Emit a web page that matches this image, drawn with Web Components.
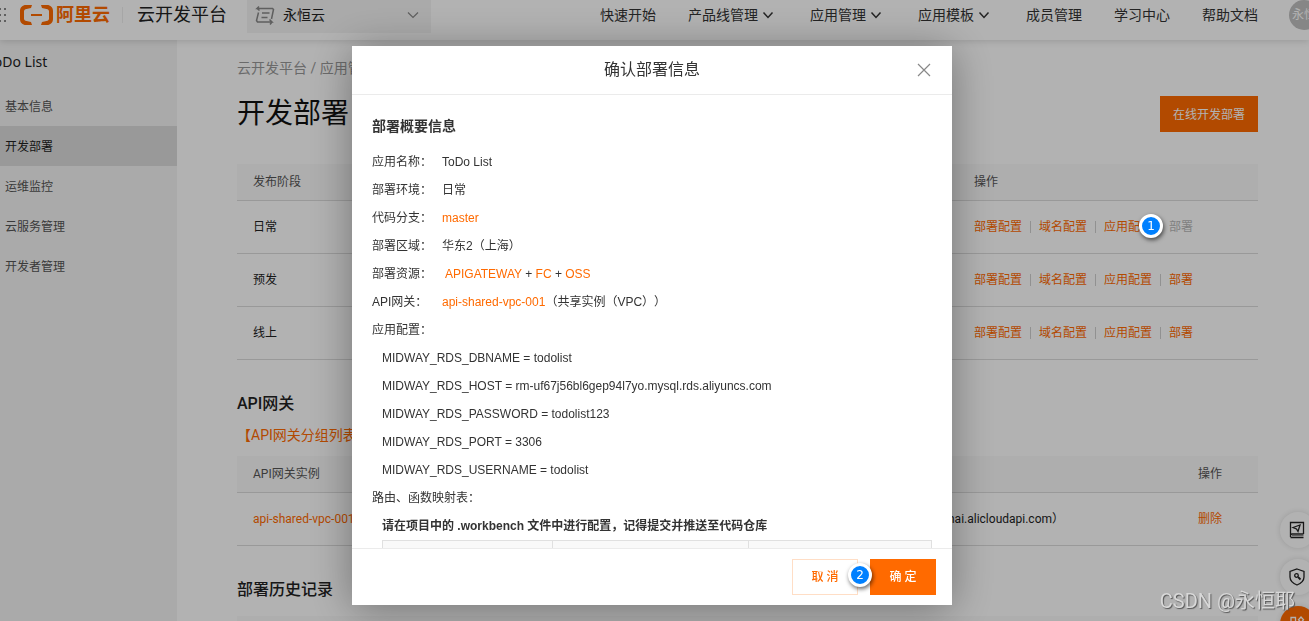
<!DOCTYPE html>
<html lang="zh-CN">
<head>
<meta charset="utf-8">
<title>云开发平台 - 开发部署</title>
<style>
  body { margin: 0; }
</style>
</head>
<body>
<deploy-app></deploy-app>
<script>
const define = (name, html, setup) => {
  const tpl = document.createElement('template');
  tpl.innerHTML = html;
  customElements.define(name, class extends HTMLElement {
    constructor() {
      super();
      this.attachShadow({ mode: 'open' }).append(tpl.content.cloneNode(true));
    }
    connectedCallback() { if (setup) setup(this, this.shadowRoot); }
  });
};

define('nav-link', `
<style>
  :host { display: block; }
  a { display: flex; align-items: center; color: #333; text-decoration: none; font-size: 14px; line-height: 20px; white-space: nowrap; }
  svg { display: none; width: 12px; height: 12px; margin: 0 4px; }
  :host([menu]) svg { display: block; }
</style>
<a href="#"><slot></slot><svg viewBox="0 0 12 12" fill="none" stroke="#333" stroke-width="1.5"><path d="M1.5 3.5 6 8.5 10.5 3.5"/></svg></a>`);

define('app-header', `
<style>
  :host { display: flex; align-items: center; height: 40px; padding-bottom: 10px; box-sizing: border-box; background: #fff; box-shadow: 0 2px 6px rgba(0,0,0,.12); position: relative; }
  .dots { width: 7px; height: 14px; margin-right: 13px; flex: none; }
  .brand { display: flex; align-items: center; gap: 3px; color: #ff6a00; font-size: 18px; font-weight: 700; line-height: 20px; text-decoration: none; white-space: nowrap; }
  .brand svg { width: 33px; height: 20px; }
  .line { width: 1px; height: 16px; background: #eee; margin: 0 14px 0 12px; }
  .platform { font-size: 18px; line-height: 24px; color: #222; white-space: nowrap; }
  .org { position: relative; display: flex; align-items: center; gap: 8px; width: 184px; height: 36px; margin-left: 20px; padding: 0 12px 0 8px; box-sizing: border-box; background: #f4f4f4; }
  .org svg { flex: none; }
  select { flex: 1; min-width: 0; appearance: none; border: 0; padding: 0; background: none; font: inherit; font-size: 14px; line-height: 20px; color: #222; }
  nav { display: flex; gap: 32px; margin-left: auto; }
  .avatar { width: 20px; height: 30px; margin-left: 31px; overflow: hidden; flex: none; }
  .avatar span { display: block; width: 30px; height: 30px; border-radius: 50%; background: #c0c0c0; color: #fff; font-size: 12px; line-height: 30px; text-align: center; white-space: nowrap; }
</style>
<svg class="dots" viewBox="0 0 7 14" fill="#888"><path d="M0 0h1v2H0zM4 0h2v2H4zM0 6h1v2H0zM4 6h2v2H4zM0 12h1v2H0zM4 12h2v2H4z"/></svg>
<a class="brand" href="#"><svg viewBox="0 0 33 20" fill="#ff6a00"><path d="M12 0H6C2.500 0 0 2.500 0 6v8c0 3.500 2.500 6 6 6h6l-1-3-4.500-1C5 15.700 4 15 4 13.500v-7C4 5 5 4.300 6.500 4L11 3zM21 0h6c3.500 0 6 2.500 6 6v8c0 3.500-2.500 6-6 6h-6l1-3 4.500-1c1.500-.3 2.500-1 2.500-2.500v-7C29 5 28 4.300 26.500 4L22 3zM11 9h11v2H11z"/></svg>阿里云</a>
<span class="line"></span>
<span class="platform">云开发平台</span>
<label class="org">
  <svg width="20" height="20" viewBox="0 0 20 20" fill="none" stroke="#888" stroke-width="1.500"><path d="M4 1.500 2 3.500H17.500L18.500 4.500 16.500 14M2 3.500 4.500 5.500M3.500 7.500 1.500 15.500 2.500 17H17L14.500 14.500M17 17 15 19.500M7 8h7.500M6.500 12.500H12.500"/></svg>
  <select aria-label="组织"><option>永恒云</option></select>
  <svg width="12" height="12" viewBox="0 0 12 12" fill="none" stroke="#888" stroke-width="1.200"><path d="M1 3.500 6 8.500 11 3.500"/></svg>
</label>
<nav>
  <nav-link>快速开始</nav-link>
  <nav-link menu>产品线管理</nav-link>
  <nav-link menu>应用管理</nav-link>
  <nav-link menu>应用模板</nav-link>
  <nav-link>成员管理</nav-link>
  <nav-link>学习中心</nav-link>
  <nav-link>帮助文档</nav-link>
</nav>
<div class="avatar"><span>永恒</span></div>`);

define('side-nav', `
<style>
  :host { display: block; width: 177px; flex: none; background: #f4f4f4; overflow: hidden; }
  h2 { margin: 0 0 0 -13px; font: 400 14px/44px "Noto Sans", sans-serif; color: #222; white-space: nowrap; }
  ul { margin: 2px 0 0; padding: 0; list-style: none; }
  a { display: block; height: 38px; padding: 2px 0 0 5px; font-size: 12px; line-height: 38px; color: #555; text-decoration: none; }
  a[aria-current] { background: #dcdcdc; color: #222; }
</style>
<h2>ToDo List</h2>
<ul>
  <li><a href="#">基本信息</a></li>
  <li><a href="#" aria-current="page">开发部署</a></li>
  <li><a href="#">运维监控</a></li>
  <li><a href="#">云服务管理</a></li>
  <li><a href="#">开发者管理</a></li>
</ul>`);

const tableStyle = `
  :host { display: block; }
  table { width: 100%; border-collapse: collapse; table-layout: fixed; font-size: 12px; line-height: 20px; }
  th, td { padding: 0 16px; text-align: left; border-bottom: 1px solid #dcdcdc; font-weight: 400; white-space: nowrap; }
  th { height: 36px; color: #555; background: #f9f9f9; }
  td { height: 52px; color: #222; }
  a { color: #ff6a00; text-decoration: none; }`;

define('row-actions', `
<style>
  :host { display: flex; align-items: center; gap: 8px; }
  a { color: #ff6a00; text-decoration: none; }
  i { width: 1px; height: 12px; background: #d0d0d0; }
  :host([locked]) a:last-child { color: #b8b8b8; }
</style>
<a href="#">部署配置</a><i></i><a href="#">域名配置</a><i></i><a href="#">应用配置</a><i></i><a href="#">部署</a>`);

define('stage-table', `
<style>${tableStyle}
  .ops { width: 268px; }
</style>
<table>
  <thead><tr><th>发布阶段</th><th class="ops">操作</th></tr></thead>
  <tbody>
    <tr><td>日常</td><td><row-actions locked></row-actions></td></tr>
    <tr><td>预发</td><td><row-actions></row-actions></td></tr>
    <tr><td>线上</td><td><row-actions></row-actions></td></tr>
  </tbody>
</table>`);

define('gateway-table', `
<style>${tableStyle}
  .domain { width: 218px; }
  .ops { width: 44px; }
</style>
<table>
  <thead><tr><th>API网关实例</th><th class="domain"></th><th class="ops">操作</th></tr></thead>
  <tbody><tr><td><a href="#">api-shared-vpc-001</a></td><td class="domain">hai.alicloudapi.com）</td><td><a href="#">删除</a></td></tr></tbody>
</table>`);

define('history-table', `
<style>${tableStyle}</style>
<table><thead><tr><th></th></tr></thead></table>`);

define('deploy-page', `
<style>
  :host { display: block; flex: 1; min-width: 0; padding: 18px 51px 0 60px; background: #fff; }
  .crumbs { font-size: 14px; line-height: 20px; color: #999; white-space: nowrap; }
  .title { display: flex; align-items: center; justify-content: space-between; height: 36px; margin: 18px 0 32px; }
  h1 { margin: 0; font-size: 28px; font-weight: 400; line-height: 36px; color: #111; }
  button { height: 36px; border: 0; padding: 0 13px 2px; background: #ff6a00; color: #fff; font: inherit; font-size: 12px; }
  h3 { margin: 32px 0 9px; font-size: 16px; font-weight: 500; line-height: 24px; color: #222; }
  .link { display: block; margin-bottom: 11px; font-size: 14px; line-height: 20px; color: #ff6a00; text-decoration: none; }
  .last { margin-bottom: 14px; }
</style>
<div class="crumbs">云开发平台 / 应用管理</div>
<div class="title"><h1>开发部署</h1><button type="button">在线开发部署</button></div>
<stage-table></stage-table>
<h3>API网关</h3>
<a class="link" href="#">【API网关分组列表】</a>
<gateway-table></gateway-table>
<h3 class="last">部署历史记录</h3>
<history-table></history-table>`);

define('float-tools', `
<style>
  :host { position: fixed; top: 512px; right: -7px; display: grid; gap: 11px; }
  button { width: 36px; height: 36px; padding: 0; border: 0; border-radius: 50%; display: grid; place-items: center; background: #fff; box-shadow: 0 0 6px rgba(0,0,0,.14); }
  .hot { background: #ff6a00; }
  svg { width: 18px; height: 18px; display: block; fill: none; stroke: #222; stroke-width: 1.300; }
  .hot svg { stroke: #fff; }
</style>
<button type="button" aria-label="文档"><svg viewBox="0 0 18 18"><path d="M1.500 16V1.500H14.500V13M1.500 14.500q0-1.500 1.500-1.500H14.500M1.500 16.500H14.500M4 6.500 11 4 9 10.500 7.500 8z"/><path d="M3 14.500H14.500" stroke="#888"/></svg></button>
<button type="button" aria-label="安全"><svg viewBox="0 0 18 18"><path d="M8 1 15 3.500V9c0 4-3.500 6.500-7 8-3.500-1.500-7-4-7-8V3.500z"/><circle cx="7.500" cy="7.500" r="1.800"/><path d="m9 9 2.500 2.500" stroke-width="1.800"/></svg></button>
<button type="button" class="hot" aria-label="应用"><svg viewBox="0 0 18 18"><path d="M2 2.500H6.500V7H2zM12 2 14.500 4.800 12 7.500 9.500 4.800zM2 10.500H6.500V15H2zM9.500 10.500H14V15H9.500z"/></svg></button>`);

define('step-badge', `
<style>
  :host { display: block; position: absolute; width: 24px; height: 24px; box-sizing: border-box; border: 3px solid #fff; border-radius: 50%; background: #0080ff; color: #fff; font: 12px/18px "DejaVu Sans", sans-serif; text-align: center; box-shadow: 1px 2px 4px rgba(0,0,0,.6); }
</style><slot></slot>`);

define('info-row', `
<style>
  :host { display: flex; line-height: 28px; }
  .label { width: 70px; flex: none; white-space: nowrap; }
</style>
<span class="label"><slot name="label"></slot></span><span><slot></slot></span>`);

define('confirm-dialog', `
<style>
  :host { position: fixed; inset: 0; display: flex; justify-content: center; align-items: flex-start; padding: 46px 5px 0 0; background: rgba(0,0,0,.3); }
  section { width: 600px; background: #fff; box-shadow: 0 4px 40px rgba(0,0,0,.36); color: #333; font-family: "Liberation Sans", "Noto Sans CJK SC", sans-serif; font-size: 12px; text-spacing-trim: space-all; }
  header { position: relative; border-bottom: 1px solid #ebebeb; }
  header h2 { margin: 0; font-size: 16px; font-weight: 400; line-height: 48px; text-align: center; }
  .close { position: absolute; top: 16px; right: 20px; width: 16px; height: 16px; padding: 0; border: 0; background: none; }
  .close svg { display: block; }
  .body { height: calc(100vh - 168px); padding: 17px 20px 0; box-sizing: border-box; overflow: hidden; }
  h3 { margin: 0 0 8px; font-size: 14px; font-weight: 700; line-height: 28px; }
  a { color: #ff6a00; text-decoration: none; }
  .gap { margin-left: 3px; }
  p { margin: 0 0 0 10px; line-height: 28px; }
  .tip { font-weight: 700; }
  table { width: 550px; margin-left: 10px; border-collapse: collapse; table-layout: fixed; }
  th { height: 36px; padding: 0; border: 1px solid #e0e0e0; background: #f9f9f9; }
  .c1 { width: 169px; } .c2 { width: 195px; }
  footer { position: relative; display: flex; justify-content: flex-end; gap: 12px; padding: 10px 16px; border-top: 1px solid #ebebeb; }
  footer button { width: 66px; height: 36px; padding: 0; border: 1px solid #ffdec6; background: #fff; color: #ff6a00; font: 500 12px/20px Roboto, "Noto Sans CJK SC", sans-serif; }
  footer .ok { border-color: #ff6a00; background: #ff6a00; color: #fff; }
  step-badge { top: 14px; right: 80px; }
</style>
<section role="dialog" aria-label="确认部署信息">
  <header><h2>确认部署信息</h2>
    <button class="close" type="button" aria-label="关闭"><svg width="16" height="16" viewBox="0 0 16 16" stroke="#888" stroke-width="1.200"><path d="M2 2 14 14M14 2 2 14"/></svg></button>
  </header>
  <div class="body">
    <h3>部署概要信息</h3>
    <info-row><span slot="label">应用名称：</span>ToDo List</info-row>
    <info-row><span slot="label">部署环境：</span>日常</info-row>
    <info-row><span slot="label">代码分支：</span><a href="#">master</a></info-row>
    <info-row><span slot="label">部署区域：</span>华东2（上海）</info-row>
    <info-row><span slot="label">部署资源：</span><a class="gap" href="#">APIGATEWAY</a> + <a href="#">FC</a> + <a href="#">OSS</a></info-row>
    <info-row><span slot="label">API网关：</span><a href="#">api-shared-vpc-001</a>（共享实例（VPC））</info-row>
    <info-row><span slot="label">应用配置：</span></info-row>
    <p>MIDWAY_RDS_DBNAME = todolist</p>
    <p>MIDWAY_RDS_HOST = rm-uf67j56bl6gep94l7yo.mysql.rds.aliyuncs.com</p>
    <p>MIDWAY_RDS_PASSWORD = todolist123</p>
    <p>MIDWAY_RDS_PORT = 3306</p>
    <p>MIDWAY_RDS_USERNAME = todolist</p>
    <info-row><span slot="label">路由、函数映射表：</span></info-row>
    <p class="tip">请在项目中的 .workbench 文件中进行配置，记得提交并推送至代码仓库</p>
    <table><thead><tr><th class="c1"></th><th class="c2"></th><th></th></tr></thead></table>
  </div>
  <footer>
    <button type="button">取 消</button><button class="ok" type="button">确 定</button>
    <step-badge>2</step-badge>
  </footer>
</section>`);

define('deploy-app', `
<style>
  :host { display: flex; flex-direction: column; height: 100vh; overflow: hidden; position: relative; font-family: Roboto, "Noto Sans CJK SC", sans-serif; }
  app-header { flex: none; z-index: 1; }
  .main { display: flex; flex: 1; min-height: 0; }
  float-tools, confirm-dialog { z-index: 2; }
  .first { z-index: 3; top: 214px; right: 146px; }
  .mark { position: absolute; z-index: 3; right: 14px; bottom: 6px; font-size: 20px; line-height: 28px; color: #d8d8d8; text-shadow: 1px 1px 1px #555; white-space: nowrap; }
</style>
<app-header></app-header>
<div class="main"><side-nav></side-nav><deploy-page></deploy-page></div>
<float-tools></float-tools>
<confirm-dialog></confirm-dialog>
<step-badge class="first">1</step-badge>
<div class="mark">CSDN @永恒耶</div>`);
</script>
</body>
</html>
